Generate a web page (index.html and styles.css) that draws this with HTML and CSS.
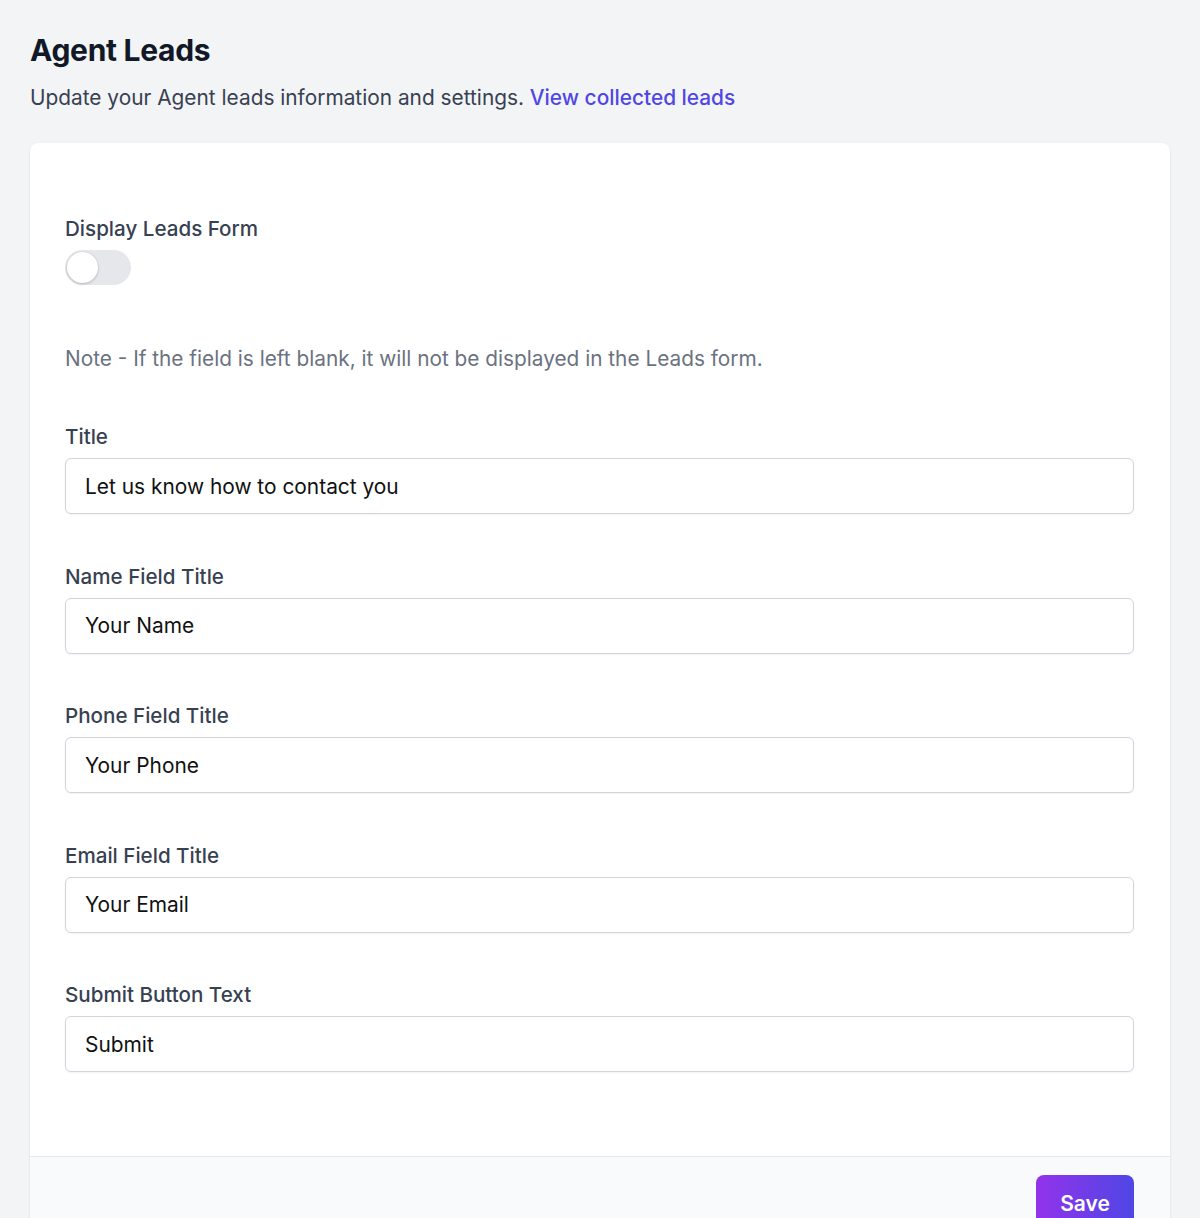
FILE: index.html
```html
<!DOCTYPE html>
<html lang="en">
<head>
<meta charset="utf-8">
<title>Agent Leads</title>
<link rel="stylesheet" href="styles.css">
</head>
<body>
<div class="page">
  <h1 class="title">Agent Leads</h1>
  <p class="subtitle">Update your Agent leads information and settings. <a class="link" href="#">View collected leads</a></p>
  <div class="card">
    <div class="card-body">
      <div class="toggle-group">
        <label class="label">Display Leads Form</label>
        <span class="toggle"><span class="knob"></span></span>
      </div>
      <p class="note">Note - If the field is left blank, it will not be displayed in the Leads form.</p>
      <div class="fields">
        <div class="field">
          <label class="label">Title</label>
          <input class="input" type="text" value="Let us know how to contact you">
        </div>
        <div class="field">
          <label class="label">Name Field Title</label>
          <input class="input" type="text" value="Your Name">
        </div>
        <div class="field">
          <label class="label">Phone Field Title</label>
          <input class="input" type="text" value="Your Phone">
        </div>
        <div class="field">
          <label class="label">Email Field Title</label>
          <input class="input" type="text" value="Your Email">
        </div>
        <div class="field">
          <label class="label">Submit Button Text</label>
          <input class="input" type="text" value="Submit">
        </div>
      </div>
    </div>
    <div class="card-footer">
      <button class="save" type="button">Save</button>
    </div>
  </div>
</div>
</body>
</html>
```

FILE: styles.css
```css
* { box-sizing: border-box; }
html, body { margin: 0; padding: 0; }
body {
  background: #f3f4f6;
  font-family: Inter, "Noto Sans", "Liberation Sans", sans-serif;
  color: #111827;
}
.page {
  padding: 32px 30px 0 30px;
}
.title {
  margin: 0;
  font-size: 30px;
  line-height: 36px;
  font-weight: 700;
  color: #111827;
  letter-spacing: -0.3px;
}
.subtitle {
  margin: 14px 0 0 0;
  font-size: 20.85px;
  line-height: 32px;
  color: #374151;
}
.link {
  color: #4f46e5;
  font-weight: 500;
  text-decoration: none;
}
.card {
  margin-top: 29px;
  background: #ffffff;
  border-radius: 8px;
  box-shadow: 0 1px 3px rgba(0,0,0,0.08), 0 1px 2px rgba(0,0,0,0.04);
  overflow: hidden;
}
.card-body {
  padding: 72px 36px 84px 35px;
}
.toggle-group {
  display: flex;
  flex-direction: column;
  align-items: flex-start;
  gap: 7px;
}
.label {
  font-size: 20.6px;
  line-height: 28px;
  font-weight: 500;
  color: #374151;
}
.toggle {
  display: block;
  width: 66px;
  height: 35px;
  border-radius: 18px;
  background: #e5e7eb;
  padding: 2px;
}
.knob {
  display: block;
  width: 31px;
  height: 31px;
  border-radius: 50%;
  background: #ffffff;
  box-shadow: 0 1px 3px rgba(0,0,0,0.2), 0 0 0 0.5px rgba(0,0,0,0.05);
}
.note {
  margin: 60px 0 0 0;
  font-size: 20.8px;
  line-height: 28px;
  color: #6b7280;
}
.fields {
  margin-top: 50px;
  display: flex;
  flex-direction: column;
  gap: 48.5px;
}
.field {
  display: flex;
  flex-direction: column;
  gap: 7px;
}
.input {
  display: block;
  width: 100%;
  height: 56px;
  padding: 0 19px;
  border: 1px solid #d1d5db;
  border-radius: 6px;
  background: #ffffff;
  box-shadow: 0 1px 2px rgba(0,0,0,0.05);
  font-family: Inter, "Noto Sans", "Liberation Sans", sans-serif;
  font-size: 20.9px;
  color: #111111;
  outline: none;
}
.card-footer {
  border-top: 1px solid #e5e7eb;
  background: #f9fafb;
  padding: 18px 36px 24px 35px;
  display: flex;
  justify-content: flex-end;
}
.save {
  height: 56px;
  width: 98px;
  border: none;
  border-radius: 8px;
  background: linear-gradient(90deg, #9333ea 0%, #4f46e5 100%);
  color: #ffffff;
  font-family: Inter, "Noto Sans", "Liberation Sans", sans-serif;
  font-size: 21px;
  font-weight: 600;
  padding: 0;
}
```
